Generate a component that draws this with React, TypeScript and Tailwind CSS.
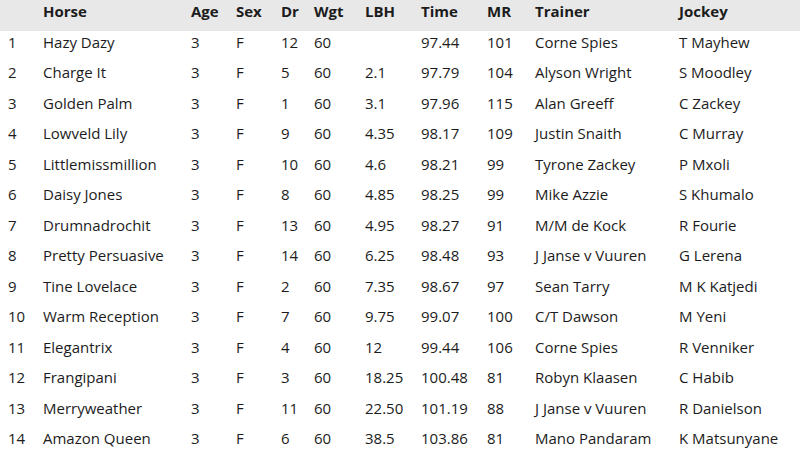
import React from 'react';

const rows: string[][] = [
  ['1', 'Hazy Dazy', '3', 'F', '12', '60', '', '97.44', '101', 'Corne Spies', 'T Mayhew'],
  ['2', 'Charge It', '3', 'F', '5', '60', '2.1', '97.79', '104', 'Alyson Wright', 'S Moodley'],
  ['3', 'Golden Palm', '3', 'F', '1', '60', '3.1', '97.96', '115', 'Alan Greeff', 'C Zackey'],
  ['4', 'Lowveld Lily', '3', 'F', '9', '60', '4.35', '98.17', '109', 'Justin Snaith', 'C Murray'],
  ['5', 'Littlemissmillion', '3', 'F', '10', '60', '4.6', '98.21', '99', 'Tyrone Zackey', 'P Mxoli'],
  ['6', 'Daisy Jones', '3', 'F', '8', '60', '4.85', '98.25', '99', 'Mike Azzie', 'S Khumalo'],
  ['7', 'Drumnadrochit', '3', 'F', '13', '60', '4.95', '98.27', '91', 'M/M de Kock', 'R Fourie'],
  ['8', 'Pretty Persuasive', '3', 'F', '14', '60', '6.25', '98.48', '93', 'J Janse v Vuuren', 'G Lerena'],
  ['9', 'Tine Lovelace', '3', 'F', '2', '60', '7.35', '98.67', '97', 'Sean Tarry', 'M K Katjedi'],
  ['10', 'Warm Reception', '3', 'F', '7', '60', '9.75', '99.07', '100', 'C/T Dawson', 'M Yeni'],
  ['11', 'Elegantrix', '3', 'F', '4', '60', '12', '99.44', '106', 'Corne Spies', 'R Venniker'],
  ['12', 'Frangipani', '3', 'F', '3', '60', '18.25', '100.48', '81', 'Robyn Klaasen', 'C Habib'],
  ['13', 'Merryweather', '3', 'F', '11', '60', '22.50', '101.19', '88', 'J Janse v Vuuren', 'R Danielson'],
  ['14', 'Amazon Queen', '3', 'F', '6', '60', '38.5', '103.86', '81', 'Mano Pandaram', 'K Matsunyane'],
];

const header = ['', 'Horse', 'Age', 'Sex', 'Dr', 'Wgt', 'LBH', 'Time', 'MR', 'Trainer', 'Jockey'];

const cols = 'grid grid-cols-[35px_148px_45px_45px_33px_51px_56px_66px_48px_144px_1fr] pl-[8px]';

export default function App() {
  return (
    <div className="w-[800px] h-[449px] overflow-hidden bg-white text-[#1c1c1c] text-[15px] leading-[22px]" style={{ fontFamily: '"Open Sans", sans-serif' }}>
      <div className={`${cols} h-[30.5px] bg-[#e8e8e8] font-bold`}>
        {header.map((h, i) => (
          <div key={i} className="whitespace-nowrap">{h}</div>
        ))}
      </div>
      {rows.map((r, ri) => (
        <div key={ri} className={`${cols} h-[30.5px]`}>
          {r.map((c, ci) => (
            <div key={ci} className="whitespace-nowrap">{c}</div>
          ))}
        </div>
      ))}
    </div>
  );
}
